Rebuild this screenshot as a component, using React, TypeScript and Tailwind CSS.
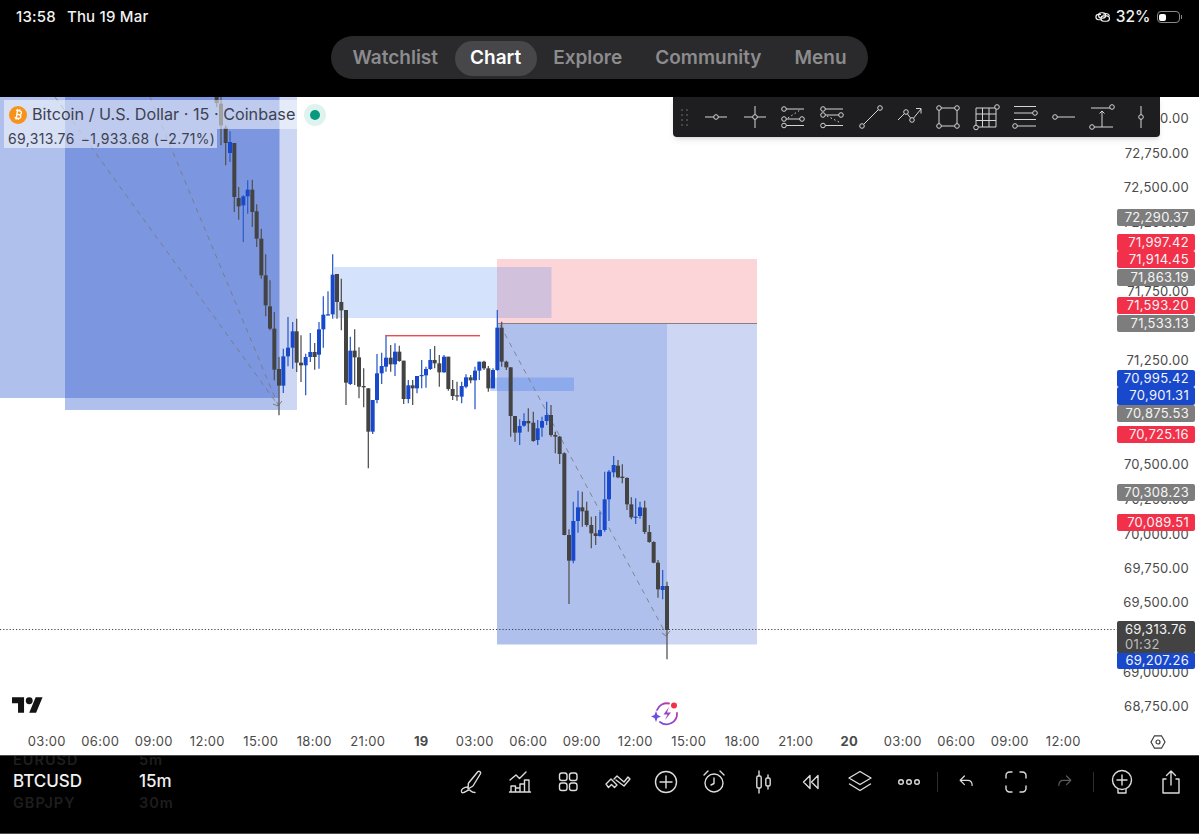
import React from "react";
import { Bitcoin } from "lucide-react";

// candle rows: x, high, bodyTop, bodyBottom, low, colour (read off 3x crops)
type Row = [number, number, number, number, number, "d" | "b"];

const firstLeg: Row[] = [
  [50, 0, 0, 18, 30, "d"], [63, 0, 20, 85, 145, "d"], [77, 85, 92, 138, 205, "d"], [90, 103, 135, 168, 195, "b"],
  [103, 138, 138, 300, 345, "d"], [116, 270, 303, 328, 368, "d"], [130, 295, 298, 325, 435, "b"], [143, 250, 278, 298, 350, "b"],
  [157, 248, 278, 345, 390, "d"], [170, 322, 343, 425, 450, "d"], [184, 395, 425, 535, 545, "d"], [197, 472, 535, 625, 658, "d"],
  [210, 550, 628, 695, 700, "d"], [223, 645, 695, 818, 850, "d"], [237, 780, 816, 866, 955, "d"], [250, 755, 778, 866, 888, "b"],
  [264, 660, 752, 778, 808, "b"], [278, 675, 703, 752, 815, "b"], [290, 665, 703, 797, 825, "d"], [303, 715, 797, 805, 855, "d"],
  [317, 770, 780, 805, 895, "b"], [331, 708, 765, 780, 795, "b"], [344, 738, 765, 780, 818, "d"], [357, 675, 697, 773, 815, "b"],
  [370, 598, 653, 697, 752, "b"], [384, 583, 652, 654, 655, "b"], [398, 472, 533, 652, 665, "b"], [411, 531, 531, 615, 665, "d"],
  [424, 545, 615, 640, 700, "d"],
];

const midLeg: Row[] = [
  [438, 210, 210, 428, 495, "d"], [451, 290, 332, 432, 435, "b"], [464, 268, 332, 352, 435, "d"], [477, 322, 352, 440, 475, "d"],
  [491, 385, 438, 442, 502, "d"], [505, 445, 445, 575, 685, "d"], [518, 480, 480, 575, 582, "b"], [531, 342, 400, 480, 490, "b"],
  [545, 338, 378, 400, 432, "b"], [558, 285, 353, 380, 395, "b"], [572, 315, 353, 373, 395, "d"], [585, 310, 335, 373, 408, "b"],
  [598, 317, 335, 363, 365, "d"], [611, 362, 362, 477, 492, "d"], [625, 420, 436, 477, 490, "b"], [638, 420, 436, 445, 495, "d"],
  [651, 408, 408, 445, 460, "b"], [665, 360, 405, 408, 445, "b"], [678, 380, 387, 406, 443, "b"], [691, 327, 360, 387, 390, "b"],
  [704, 318, 360, 370, 385, "d"], [718, 345, 370, 397, 440, "d"], [732, 345, 350, 397, 398, "b"], [745, 350, 350, 447, 452, "d"],
  [758, 420, 447, 468, 480, "d"], [771, 425, 466, 469, 482, "d"], [785, 425, 438, 470, 490, "b"], [798, 403, 412, 440, 445, "b"],
  [812, 405, 412, 421, 430, "d"], [825, 380, 392, 421, 508, "b"], [838, 365, 365, 392, 420, "b"], [852, 362, 365, 385, 390, "d"],
  [865, 378, 385, 445, 455, "d"], [879, 385, 390, 445, 445, "b"], [892, 210, 263, 390, 392, "b"], [905, 245, 263, 365, 380, "d"],
  [919, 362, 365, 382, 390, "d"], [932, 382, 382, 528, 590, "d"], [945, 528, 528, 578, 605, "d"], [959, 538, 558, 578, 615, "b"],
  [972, 520, 543, 557, 560, "b"], [985, 505, 543, 550, 575, "d"], [1000, 515, 548, 603, 605, "d"], [1013, 540, 565, 600, 615, "b"],
  [1026, 530, 543, 563, 590, "b"], [1040, 485, 525, 543, 555, "b"], [1053, 495, 525, 585, 590, "d"], [1066, 575, 585, 590, 640, "d"],
  [1079, 588, 590, 642, 672, "d"],
];

const lastLeg: Row[] = [
  [223, 397, 400, 645, 646, "d"], [237, 628, 645, 722, 852, "d"], [250, 545, 603, 722, 730, "b"], [264, 512, 562, 603, 638, "b"],
  [277, 515, 562, 574, 620, "d"], [290, 545, 572, 615, 620, "d"], [304, 590, 615, 640, 685, "d"], [317, 588, 640, 648, 675, "d"],
  [330, 575, 630, 648, 650, "b"], [344, 455, 538, 630, 635, "b"], [357, 450, 455, 538, 603, "b"], [371, 408, 435, 457, 472, "b"],
  [384, 420, 437, 472, 475, "d"], [397, 433, 470, 474, 490, "d"], [411, 472, 474, 553, 570, "d"], [424, 532, 553, 592, 598, "d"],
  [437, 535, 590, 591, 612, "b"], [450, 545, 562, 588, 596, "b"], [464, 542, 563, 636, 642, "d"], [478, 615, 636, 666, 668, "d"],
  [491, 664, 666, 728, 730, "d"], [504, 720, 728, 808, 833, "d"], [518, 750, 798, 810, 838, "b"], [531, 785, 798, 930, 1018, "d"],
];

const toPage = (rows: Row[], ox: number, oy: number): Row[] =>
  rows.map(([x, h, t, b, l, c]) => [ox + x / 3, oy + h / 3, oy + t / 3, oy + b / 3, oy + l / 3, c]);

const candles = [...toPage(firstLeg, 200, 97), ...toPage(midLeg, 200, 240), ...toPage(lastLeg, 490, 320)];

const ticks: [string, number][] = [
  ["73,000.00", 119], ["72,750.00", 153.5], ["72,500.00", 188], ["72,250.00", 222.5], ["71,750.00", 292], ["71,250.00", 361],
  ["70,500.00", 465], ["70,250.00", 500], ["70,000.00", 534.5], ["69,750.00", 569], ["69,500.00", 603], ["69,000.00", 673], ["68,750.00", 707],
];

const tags: [string, number, string][] = [
  ["72,290.37", 217.5, "bg-[#7d7d7d]"], ["71,997.42", 242.5, "bg-[#f2304a]"], ["71,914.45", 259.5, "bg-[#f2304a]"], ["71,863.19", 277.5, "bg-[#7d7d7d]"],
  ["71,593.20", 305.5, "bg-[#f2304a]"], ["71,533.13", 323.5, "bg-[#7d7d7d]"], ["70,995.42", 378.5, "bg-[#1848cc]"], ["70,901.31", 396, "bg-[#1848cc]"],
  ["70,875.53", 413.5, "bg-[#7d7d7d]"], ["70,725.16", 434.5, "bg-[#f2304a]"], ["70,308.23", 492.5, "bg-[#7d7d7d]"], ["70,089.51", 522.5, "bg-[#f2304a]"],
  ["69,207.26", 660.5, "bg-[#1848cc]"],
];

const times = ["03:00", "06:00", "09:00", "12:00", "15:00", "18:00", "21:00", "19", "03:00", "06:00", "09:00", "12:00", "15:00", "18:00", "21:00", "20", "03:00", "06:00", "09:00", "12:00"];

const PLOT_TOP = 97;

function Node({ x, y }: { x: number; y: number }) {
  return <circle cx={x} cy={y} r={2.3} fill="#1e1e20" />;
}

// drawing tool favourites, 28x28 box centred on 14,14
const tools: React.ReactNode[] = [
  <><path d="M3 14h22" /><Node x={14} y={14} /></>,
  <><path d="M3 14h22M14 3v22" /><Node x={14} y={14} /></>,
  <><path d="M7 6h18M7 16h14M7 22.500h18" /><path d="M9 15l12-8" strokeDasharray="1.500 2.500" /><Node x={5} y={6} /><Node x={5} y={16} /><Node x={23} y={16} /><Node x={5} y={22.500} /></>,
  <><path d="M7 6h18M7 12h14M7 22.500h18" /><path d="M9 13l14 7" strokeDasharray="1.500 2.500" /><Node x={5} y={6} /><Node x={5} y={12} /><Node x={23} y={12} /><Node x={5} y={22.500} /></>,
  <><path d="M6 22L22 6" /><Node x={5} y={23} /><Node x={23} y={5} /></>,
  <><path d="M3 17l8-8 6 8 9-11M21 5.500h5v5" /><Node x={11} y={9} /><Node x={17} y={17} /></>,
  <><path d="M5 5h18v18H5z" /><Node x={5} y={5} /><Node x={23} y={5} /><Node x={5} y={23} /><Node x={23} y={23} /></>,
  <><path d="M4 5h20v19H4zM10.500 5v19M17 5v19M4 11h20M4 17.500h20" /><Node x={25} y={4} /><Node x={4} y={24.500} /></>,
  <><path d="M3 3.500h22M3 10h20M3 16.500h22M6 23h19" /><Node x={24} y={10} /><Node x={4} y={23} /></>,
  <><path d="M7 14h18" /><Node x={5} y={14} /></>,
  <><path d="M3 5h20M6 24h19M14 24V8M11.500 10.500L14 8l2.500 2.500" /><Node x={24} y={4} /><Node x={4} y={24} /></>,
  <><path d="M14 3v22" /><Node x={14} y={14} /></>,
];

// bottom bar icons, 28x28 box
const barIcons: React.ReactNode[] = [
  <><path d="M21 3.500c1.300-.8 3 .4 2.600 2L16 18l-5 3 .4-5.800L21 3.500z" /><path d="M11 19c-4 0-7.500 2.500-6.500 5 1.200 2.500 6-2.500 8-2 1.800.4 1 2.500 5.500 2.500" /></>,
  <><path d="M4 12l6-5 3.500 3.500L20 4" /><path d="M5 24v-6h4.500v6M9.500 24v-4H14v4M14 24v-8h4.500M18.500 24V12h4.500v12M3.500 24h21" /></>,
  <><rect x="5.500" y="5" width="7.500" height="7.500" rx="2.300" /><rect x="15.500" y="5" width="7.500" height="7.500" rx="2.300" /><rect x="5.500" y="15" width="7.500" height="7.500" rx="2.300" /><rect x="15.500" y="15" width="7.500" height="7.500" rx="2.300" /></>,
  <><path d="M3 16l5-5 6 6-2.500 2.500L8.500 16.500 5.500 19.500z" /><path d="M11 11l3-3 7 6 4-5 2 2-6 7-8-6" /></>,
  <><circle cx="14" cy="14" r="10.500" /><path d="M14 8v12M8 14h12" /></>,
  <><circle cx="14" cy="15" r="9" /><path d="M14 10v5.500l-3 1.500M4 7l4-4M24 7l-4-4" /></>,
  <><path d="M10 3v22M19 7v14" /><rect x="7.800" y="8" width="4.400" height="12" rx="1.500" fill="#000" /><rect x="16.800" y="10" width="4.400" height="8" rx="1.500" fill="#000" /></>,
  <><path d="M13 7.500L6.500 14l6.500 6.500zM21 7.500L14.500 14l6.500 6.500z" /></>,
  <><path d="M14 3.500L25 10l-11 6.500L3 10z" /><path d="M3.500 16l10.500 6.500L24.500 16" /></>,
  <><circle cx="6" cy="14" r="2.300" /><circle cx="14" cy="14" r="2.300" /><circle cx="22" cy="14" r="2.300" /></>,
];

const Divider = () => <div className="w-px h-[20px] bg-[#2e2e2e]" />;

function Icon({ children, className }: { children: React.ReactNode; className?: string }) {
  return (
    <svg viewBox="0 0 28 28" className={className ?? "w-[28px] h-[28px]"} fill="none" stroke="currentColor" strokeWidth="1.400" strokeLinecap="round" strokeLinejoin="round">
      {children}
    </svg>
  );
}

export default function App() {
  return (
    <div className="relative w-[1199px] h-[834px] flex flex-col bg-white overflow-hidden font-['Inter',sans-serif]">
      {/* status bar + nav pill */}
      <header className="h-[97px] bg-black flex flex-col shrink-0">
        <div className="h-[36px] flex items-center justify-between pl-[16px] pr-[17px] pb-[2px] text-[#f2f2f2]">
          <div className="flex items-center gap-[11px] text-[15px] font-medium tracking-[.2px]">
            <span>13:58</span>
            <span>Thu 19 Mar</span>
          </div>
          <div className="flex items-center text-[15.500px] font-medium">
            <svg viewBox="0 0 22 14" className="w-[17px] h-[12px] mr-[5px]" fill="none" stroke="#f2f2f2" strokeWidth="1.500">
              <path d="M9 3.500H6a3.500 3.500 0 0 0 0 7h3M12 3.500c3-1.500 7-1 8 2" />
              <rect x="6" y="1.500" width="9" height="7" rx="3.500" />
              <rect x="9" y="5.500" width="11" height="7" rx="3.500" />
            </svg>
            <span>32%</span>
            <div className="ml-[6px] w-[23px] h-[12px] rounded-[4px] border border-[#8a8a8a] p-[1.500px]">
              <div className="w-[7px] h-full rounded-[2px] bg-white" />
            </div>
            <div className="w-[1.500px] h-[4px] bg-[#8a8a8a] ml-[1px]" />
          </div>
        </div>
        <div className="flex justify-center">
          <nav className="h-[43px] flex items-center rounded-full bg-[#2a2a2c] px-[4.500px] pt-[1px] text-[19px] font-semibold text-[#8c8c8e]">
            <span className="px-[16.500px]">Watchlist</span>
            <span className="h-[35px] flex items-center px-[15.500px] rounded-full bg-[#474749] text-white">Chart</span>
            <span className="px-[16.500px]">Explore</span>
            <span className="px-[16.500px]">Community</span>
            <span className="px-[16.500px]">Menu</span>
          </nav>
        </div>
      </header>

      {/* chart */}
      <main className="flex-1 flex flex-col min-h-0">
        <div className="relative flex-1 overflow-hidden">
          <svg viewBox={`0 ${PLOT_TOP} 1199 631`} className="absolute inset-0 w-[1199px] h-[631px]">
            {/* left position tools */}
            <rect x="0" y="97" width="279.500" height="301" fill="#1e4bc9" fillOpacity=".35" />
            <rect x="65" y="97" width="214.500" height="313" fill="#1e4bc9" fillOpacity=".35" />
            <rect x="279.500" y="97" width="17.500" height="313" fill="#1e4bc9" fillOpacity=".225" />
            {/* right position tool */}
            <rect x="497" y="259" width="260" height="64" fill="#fbd5d8" />
            <rect x="334" y="267" width="217.500" height="51" fill="#3a78ea" fillOpacity=".21" />
            <rect x="497" y="323.500" width="170" height="321" fill="#1e4bc9" fillOpacity=".35" />
            <rect x="667" y="323.500" width="90" height="321" fill="#1e4bc9" fillOpacity=".225" />
            <rect x="490" y="377.500" width="84" height="13.500" fill="#3a78ea" fillOpacity=".3" />
            <rect x="497" y="323" width="260" height="1" fill="#8a7f80" />
            {/* forecast dashes */}
            <g stroke="#777" strokeWidth="1" strokeOpacity=".8" strokeDasharray="5 5" fill="none">
              <path d="M150 97L278 405" />
              <path d="M55 97L278 405" />
              <path d="M500 325L666 634" />
            </g>
            <path d="M273 404l5 2 4-5M662 633l4 3 4-5" stroke="#7d7d7d" fill="none" />
            <path d="M0 629.500H1117" stroke="#444" strokeDasharray="1.200 2" />
            {candles.map(([x, h, t, b, l, c], i) => (
              <g key={i}>
                <path d={`M${x} ${h}V${l}`} stroke={c === "b" ? "#2f5fcb" : "#555"} strokeWidth="1.300" />
                <rect x={x - 2} y={t} width="4" height={Math.max(b - t, 1.200)} fill={c === "b" ? "#1848cc" : "#434343"} />
              </g>
            ))}
            <rect x="385.500" y="335" width="94.500" height="1.400" fill="#ef4a4f" />
          </svg>

          {/* legend */}
          <div className="absolute left-[4px] top-[3px] text-[#3d4250]">
            <div className="flex items-center h-[29px] w-[293px] bg-white/50 pl-[5px]">
              <div className="w-[18px] h-[18px] rounded-full bg-[#f7931a] flex items-center justify-center">
                <Bitcoin className="w-[13px] h-[13px] text-white" strokeWidth={2.500} />
              </div>
              <span className="ml-[5px] text-[16.200px] whitespace-nowrap">Bitcoin / U.S. Dollar · 15 · Coinbase</span>
            </div>
            <div className="flex items-center h-[19px] w-[213px] bg-white/50 pl-[4px] text-[14px] tracking-[.35px] whitespace-nowrap">
              <span>69,313.76</span>
              <span className="ml-[6px]">−1,933.68 (−2.71%)</span>
            </div>
          </div>
          <div className="absolute left-[304px] top-[7px] w-[22px] h-[22px] rounded-full bg-[#dff3ee] flex items-center justify-center">
            <div className="w-[10px] h-[10px] rounded-full bg-[#089981]" />
          </div>

          {/* price axis: each label sits at its price */}
          {ticks.map(([label, y]) => (
            <div key={label} className="absolute right-[10px] h-[17px] flex items-center text-[13px] tracking-[.3px] text-[#4a4a4a]" style={{ top: y - PLOT_TOP - 8.5 }}>
              {label}
            </div>
          ))}
          {tags.map(([label, y, bg]) => (
            <div key={label} className={`absolute left-[1117px] w-[78px] h-[17.500px] rounded-[2px] flex items-center justify-end pr-[6px] text-[13px] tracking-[.3px] text-[#f4f4f4] ${bg}`} style={{ top: y - PLOT_TOP - 8.75 }}>
              {label}
            </div>
          ))}
          <div className="absolute left-[1117px] top-[524px] w-[78px] h-[32px] rounded-[2px] bg-[#434343] flex flex-col justify-center pl-[8px] text-[13px] leading-[15px] tracking-[.3px]">
            <span className="text-[#f4f4f4]">69,313.76</span>
            <span className="text-[#bdbdbd]">01:32</span>
          </div>

          {/* logo */}
          <svg viewBox="0 4 36 18" className="absolute left-[12px] top-[600px] w-[31px] h-[16px]" fill="#131313">
            <path d="M14 22H7V11H0V4h14v18zM28 22h-8l7.500-18h8L28 22z" />
            <circle cx="20" cy="8" r="4" />
          </svg>

          {/* assistant badge */}
          <svg viewBox="0 0 32 28" className="absolute left-[650px] top-[603px] w-[32px] h-[28px]" fill="none">
            <defs>
              <linearGradient id="ring" x1="0" y1="1" x2="1" y2="0">
                <stop offset="0" stopColor="#6a4ee8" />
                <stop offset="1" stopColor="#d0359f" />
              </linearGradient>
            </defs>
            <path d="M7 10a10.500 10.500 0 0 1 12-6.500M27 13a10.500 10.500 0 0 1-17 9" stroke="url(#ring)" strokeWidth="1.800" strokeLinecap="round" />
            <path d="M19 7l-5.500 7.500h4L15 20l6-7.500h-4z" fill="url(#ring)" />
            <path d="M6 11l1.500 4L11 16.500 7.500 18 6 22l-1.500-4L1 16.500 4.500 15z" fill="#6a4ee8" />
            <circle cx="24" cy="5.500" r="3" fill="#f2304a" />
          </svg>
        </div>

        {/* time axis */}
        <div className="relative h-[27px] flex items-start shrink-0 pl-[20px] text-[13px] leading-[27px] tracking-[.3px] text-[#4a4a4a]">
          {times.map((t, i) => (
            <span key={i} className={`w-[53.500px] text-center shrink-0 ${t.length === 2 ? "font-bold" : ""}`}>{t}</span>
          ))}
          <svg viewBox="0 0 16 16" className="absolute left-[1150px] top-[6px] w-[16px] h-[16px]" fill="none" stroke="#3c3c3c" strokeWidth="1.200">
            <path d="M4.500 1.800h7L15 8l-3.500 6.200h-7L1 8z" />
            <circle cx="8" cy="8" r="2" />
          </svg>
        </div>
      </main>

      {/* bottom bar */}
      <footer className="h-[79px] shrink-0 bg-black border-t border-[#4a4a4a] border-b flex items-start text-[#dcdcdc] overflow-hidden">
        <div className="w-[139px] pl-[13px] -mt-[3px] font-medium">
          <div className="h-[13px] text-[14.500px] leading-[13px] font-semibold tracking-[1px] text-[#1e1e1e]">EURUSD</div>
          <div className="h-[24px] mt-[3px] text-[17px] leading-[24px] text-[#f0f0f0]">BTCUSD</div>
          <div className="h-[16px] mt-[2px] text-[14.500px] leading-[16px] font-semibold tracking-[1px] text-[#1e1e1e]">GBPJPY</div>
        </div>
        <div className="w-[308px] -mt-[3px] font-medium">
          <div className="h-[13px] text-[14.500px] leading-[13px] font-semibold tracking-[1px] text-[#1e1e1e]">5m</div>
          <div className="h-[24px] mt-[3px] text-[17px] leading-[24px] text-[#f0f0f0]">15m</div>
          <div className="h-[16px] mt-[2px] text-[14.500px] leading-[16px] font-semibold tracking-[1px] text-[#1e1e1e]">30m</div>
        </div>
        <div className="flex items-center h-[52px]">
          {barIcons.map((icon, i) => (
            <div key={i} className="w-[48.600px] flex justify-center shrink-0"><Icon>{icon}</Icon></div>
          ))}
          <div className="w-[4px]" />
          <Divider />
          <div className="w-[5px]" />
          <div className="w-[48.600px] flex justify-center">
            <Icon className="w-[24px] h-[24px]"><path d="M11 7L6 12l5 5M6 12h9c3 0 5 2 5 6" /></Icon>
          </div>
          <div className="w-[48.600px] flex justify-center">
            <Icon><path d="M4 10V7.500A3.500 3.500 0 0 1 7.500 4H10M18 4h2.500A3.500 3.500 0 0 1 24 7.500V10M24 18v2.500a3.500 3.500 0 0 1-3.500 3.500H18M10 24H7.500A3.500 3.500 0 0 1 4 20.500V18" /></Icon>
          </div>
          <div className="w-[48.600px] flex justify-center text-[#5a5a5a]">
            <Icon className="w-[24px] h-[24px]"><path d="M17 7l5 5-5 5M22 12h-9c-3 0-5 2-5 6" /></Icon>
          </div>
          <div className="w-[4px]" />
          <Divider />
          <div className="w-[4px]" />
          <div className="w-[49px] flex justify-center">
            <Icon><circle cx="14" cy="12" r="9.500" /><path d="M14 7v10M9 12h10M10 21.500v3.500h8v-3.500" /></Icon>
          </div>
          <div className="w-[49px] flex justify-center">
            <Icon><path d="M9 11H6v14h16V11h-3M14 17V3M9.500 7.500L14 3l4.500 4.500" /></Icon>
          </div>
        </div>
      </footer>

      {/* drawing favourites float over the chart */}
      <div className="absolute left-[673px] top-[97px] w-[487px] h-[40px] bg-[#1e1e20] rounded-b-[4px] shadow-md flex items-center pl-[8px]">
        <div className="grid grid-cols-2 gap-x-[3px] gap-y-[3px] mr-[9px]">
          {[0, 1, 2, 3, 4, 5, 6, 7].map((d) => (
            <div key={d} className="w-[2px] h-[2px] rounded-full bg-[#555]" />
          ))}
        </div>
        {tools.map((tool, i) => (
          <div key={i} className="w-[38.600px] flex justify-center shrink-0">
            <svg viewBox="0 0 28 28" className="w-[28px] h-[28px]" fill="none" stroke="#d4d4d4" strokeWidth="1">{tool}</svg>
          </div>
        ))}
      </div>
    </div>
  );
}
